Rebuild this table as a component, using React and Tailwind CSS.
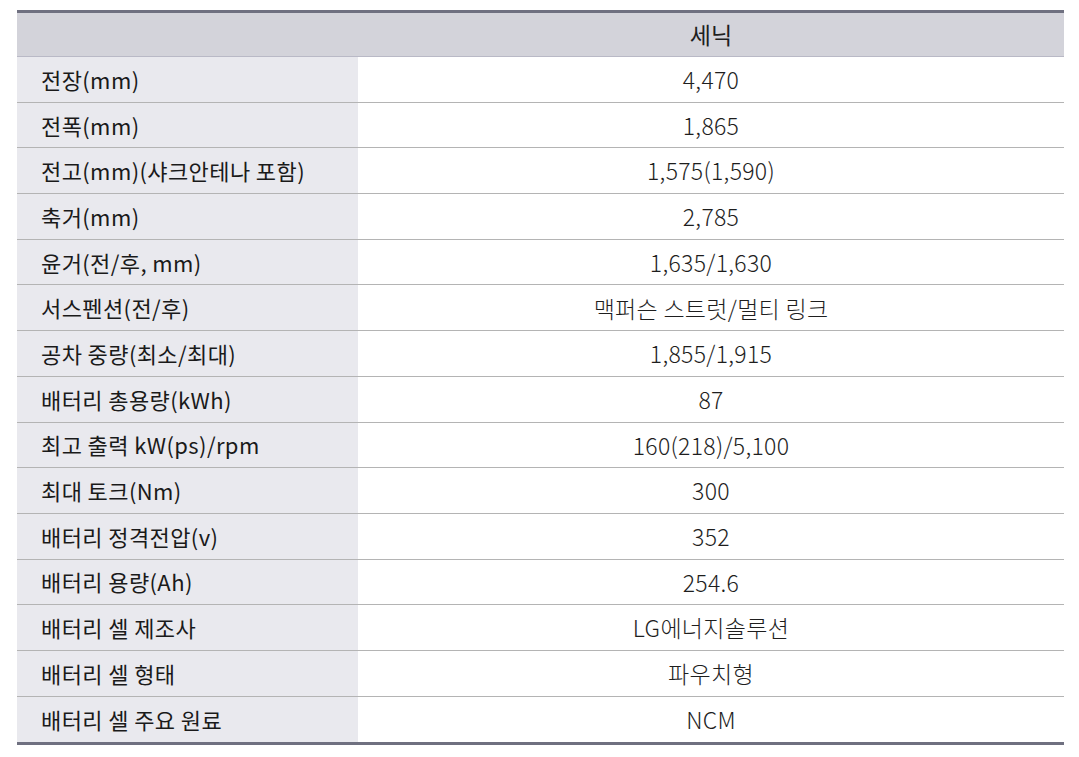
import React from 'react';

const rows = [
  ['전장(mm)', '4,470'],
  ['전폭(mm)', '1,865'],
  ['전고(mm)(샤크안테나 포함)', '1,575(1,590)'],
  ['축거(mm)', '2,785'],
  ['윤거(전/후, mm)', '1,635/1,630'],
  ['서스펜션(전/후)', '맥퍼슨 스트럿/멀티 링크'],
  ['공차 중량(최소/최대)', '1,855/1,915'],
  ['배터리 총용량(kWh)', '87'],
  ['최고 출력 kW(ps)/rpm', '160(218)/5,100'],
  ['최대 토크(Nm)', '300'],
  ['배터리 정격전압(v)', '352'],
  ['배터리 용량(Ah)', '254.6'],
  ['배터리 셀 제조사', 'LG에너지솔루션'],
  ['배터리 셀 형태', '파우치형'],
  ['배터리 셀 주요 원료', 'NCM'],
];

const App = () => {
  return (
    <div
      className="w-[1079px] h-[757px] bg-white pt-[10px] pl-[17px]"
      style={{ fontFamily: '"Noto Sans CJK KR", "Noto Sans", sans-serif' }}
    >
      <div className="w-[1047px] border-t-[3px] border-b-[3px] border-[#6f7080]">
        {/* Header */}
        <div className="flex h-[44px] bg-[#d3d3da] border-b border-[#b9b9c6]">
          <div className="w-[341px]" />
          <div className="flex-1 flex items-center justify-center text-[23px] text-[#1e1e1e] font-normal">
            세닉
          </div>
        </div>

        {/* Rows */}
        {rows.map(([label, value], i) => (
          <div
            key={label}
            className={`flex h-[45.7px] ${i < rows.length - 1 ? 'border-b border-[#b4b4b4]' : ''}`}
          >
            <div className="w-[341px] bg-[#e9e9ee] flex items-center pl-[24px] text-[22px] text-[#1a1a1a] font-normal tracking-[0.4px]">
              {label}
            </div>
            <div className="flex-1 flex items-center justify-center text-[23px] text-[#1e1e1e] font-light tracking-[0.3px]">
              {value}
            </div>
          </div>
        ))}
      </div>
    </div>
  );
};

export default App;
